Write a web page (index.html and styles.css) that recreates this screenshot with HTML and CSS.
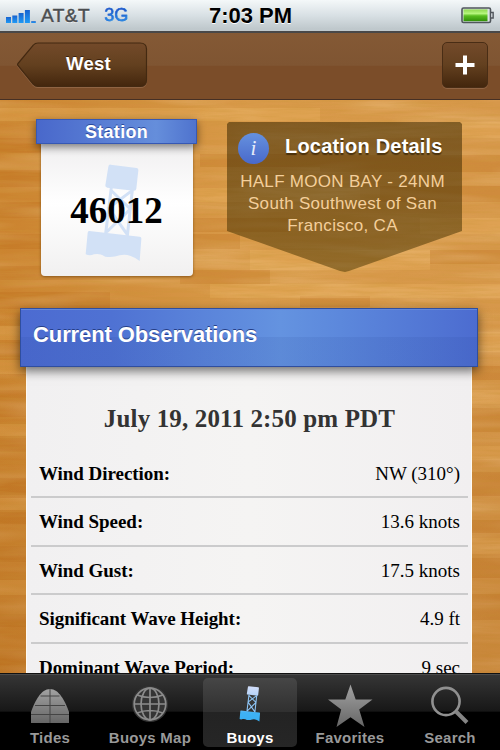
FILE: index.html
```
<!DOCTYPE html>
<html lang="en">
<head>
    <meta charset="UTF-8">
    <meta name="viewport" content="width=device-width, initial-scale=1.0">
    <title>Station 46012</title>
    <link rel="stylesheet" href="styles.css">
</head>
<body>
    <!-- Shared shapes -->
    <svg class="defs" width="0" height="0" aria-hidden="true">
        <defs>
            <linearGradient id="grey" x1="0" y1="0" x2="0" y2="1">
                <stop offset="0" stop-color="#a2a2a2"/>
                <stop offset="1" stop-color="#666"/>
            </linearGradient>
            <linearGradient id="sky" gradientUnits="userSpaceOnUse" x1="0" y1="178" x2="0" y2="467">
                <stop offset="0" stop-color="#d3defa"/>
                <stop offset="0.6" stop-color="#8ec4f4"/>
                <stop offset="0.75" stop-color="#3fb2f5"/>
                <stop offset="1" stop-color="#39aef2"/>
            </linearGradient>
            <linearGradient id="bars" x1="0" y1="0" x2="0" y2="1">
                <stop offset="0" stop-color="#1762cf"/>
                <stop offset="1" stop-color="#1e9af6"/>
            </linearGradient>
            <linearGradient id="back" x1="0" y1="0" x2="0" y2="1">
                <stop offset="0" stop-color="#734a2a"/>
                <stop offset="0.5" stop-color="#63401f"/>
                <stop offset="1" stop-color="#43260d"/>
            </linearGradient>
            <linearGradient id="charge" x1="0" y1="0" x2="0" y2="1">
                <stop offset="0" stop-color="#8fd94e"/>
                <stop offset="0.35" stop-color="#b5f57c"/>
                <stop offset="0.55" stop-color="#58bd1e"/>
                <stop offset="1" stop-color="#318f08"/>
            </linearGradient>
            <symbol id="buoy" viewBox="190 170 180 300">
                <path d="M270 178 348 188Q354 189 353 195L347 250Q346 257 339 256L260 247Q253 246 254 240L263 184Q264 177 270 178Z"/>
                <path d="M206 377 357 394Q363 395 362 401L357 467Q345 457 330 452Q313 445 297 450Q275 458 254 454Q238 443 220 447Q208 453 195 447L201 382Q202 376 206 377Z"/>
                <path class="truss" d="M272 246 255 384M335 254 320 392M270 254 329 311 258 380M334 256 264 308 320 388"/>
            </symbol>
        </defs>
    </svg>

    <div class="screen">
        <header class="status-bar">
            <div class="carrier">
                <svg class="signal" width="30" height="14" viewBox="0 0 30 14">
                    <g fill="url(#bars)">
                        <rect x="0" y="7" width="5" height="6"/>
                        <rect x="6.3" y="5.5" width="5" height="7.5"/>
                        <rect x="12.6" y="3" width="5" height="10"/>
                        <rect x="18.9" y="0" width="5" height="13"/>
                        <rect x="25.2" y="11.2" width="4.6" height="1.8"/>
                    </g>
                </svg>
                <span class="carrier-name">AT&amp;T</span>
                <span class="network">3G</span>
            </div>
            <div class="clock">7:03 PM</div>
            <div class="battery">
                <svg width="34" height="17" viewBox="0 0 34 17">
                    <rect x="1" y="1" width="28.5" height="14.5" rx="1.5" fill="#d9e3e3" stroke="#50565c" stroke-width="1.6"/>
                    <rect x="2.5" y="2.4" width="24" height="11.8" fill="url(#charge)"/>
                    <path d="M30 5.5h2.2v5.5H30" fill="#c5cbd0" stroke="#50565c" stroke-width="1.3"/>
                </svg>
            </div>
        </header>

        <nav class="nav-bar">
            <a class="back-button">
                <svg class="back-shape" width="131" height="46" viewBox="0 0 131 46">
                    <path d="M21 1H123Q129.5 1 129.5 7V38Q129.5 44.5 123 44.5H21Q18 44.5 16.5 42.5L1 23.5Q0 22.5 1 21.5L16.5 3Q18 1 21 1Z" fill="url(#back)" stroke="#432911" stroke-width="1.2"/>
                </svg>
                <span class="back-label">West</span>
            </a>
            <a class="add-button">
                <svg width="20" height="20" viewBox="0 0 20 20">
                    <path d="M8 .5h4v7.5h7.5v4H12v7.5H8V12H.5V8H8z" fill="#fff"/>
                </svg>
            </a>
        </nav>

        <main class="content">
            <!-- Wooden desk behind the cards -->
            <svg class="wood" width="500" height="574" viewBox="0 0 500 574">
                <defs>
                    <filter id="grain" x="0" y="0" width="100%" height="100%">
                        <feTurbulence type="fractalNoise" baseFrequency="0.025 0.35" numOctaves="3" seed="7"/>
                        <feColorMatrix values="0 0 0 0 0.6  0 0 0 0 0.3  0 0 0 0 0.04  1.5 0 0 0 -0.55"/>
                    </filter>
                    <filter id="shine" x="0" y="0" width="100%" height="100%">
                        <feTurbulence type="fractalNoise" baseFrequency="0.008 0.07" numOctaves="2" seed="21"/>
                        <feColorMatrix values="0 0 0 0 1  0 0 0 0 0.78  0 0 0 0 0.45  2 0 0 0 -0.85"/>
                    </filter>
                    <linearGradient id="desk">
                        <stop offset="0" stop-color="#cb832f"/>
                        <stop offset="0.5" stop-color="#d99a4a"/>
                        <stop offset="1" stop-color="#d7984b"/>
                    </linearGradient>
                    <linearGradient id="shade" x1="0" y1="0" x2="0" y2="1">
                        <stop offset="0.35" stop-color="#a85f15" stop-opacity="0"/>
                        <stop offset="1" stop-color="#a85f15" stop-opacity="0.3"/>
                    </linearGradient>
                </defs>
                <rect width="500" height="574" fill="url(#desk)"/>
                <path fill="#b86816" opacity="0.26" d="M0 38h150v15H0zM320 55h180v17H320zM0 70h92v17H0zM200 54h120v13H200zM0 102h60v16H0zM180 118h110v14H180zM380 86h120v16H380zM0 134h240v15H0zM430 150h70v14H430zM0 166h130v14H0zM180 170h90v14H180zM0 192h110v17H0zM300 196h70v11H300zM0 242h27v15H0zM0 290h27v27H0zM0 338h27v14H0zM0 378h27v17H0zM0 412h27v12H0zM0 446h27v16H0zM0 514h27v13H0zM472 266h28v14H472zM472 308h28v24H472zM472 372h28v24H472zM472 420h28v13H472zM472 458h28v20H472zM472 494h28v26H472zM0 550h27v24H0z"/>
                <path fill="#f0b967" opacity="0.28" d="M0 8h320v13H0zM350 22h150v16H350zM120 88h240v14H120zM420 118h80v16H420zM250 150h180v20H250zM210 184h290v14H210zM60 209h200v12H60zM0 226h27v14H0zM0 260h27v14H0zM0 324h27v12H0zM0 398h27v12H0zM0 480h27v15H0zM472 232h28v20H472zM472 290h28v14H472zM472 346h28v14H472zM472 438h28v16H472z"/>
                <rect width="500" height="574" filter="url(#shine)" opacity="0.3"/>
                <rect width="500" height="574" filter="url(#grain)" opacity="0.5"/>
                <rect width="500" height="574" fill="url(#shade)"/>
            </svg>

            <section class="cards">
                <div class="station">
                    <h2 class="station-title">Station</h2>
                    <div class="station-body">
                        <svg class="station-buoy" width="60" height="100"><use href="#buoy"/></svg>
                        <span class="station-id">46012</span>
                    </div>
                </div>
                <div class="location">
                    <div class="location-head">
                        <span class="info-icon">i</span>
                        <h2 class="location-title">Location Details</h2>
                    </div>
                    <p class="location-text">HALF MOON BAY - 24NM<br>South Southwest of San<br>Francisco, CA</p>
                </div>
            </section>

            <section class="observations">
                <h2 class="observations-title">Current Observations</h2>
                <div class="sheet">
                    <h3 class="timestamp">July 19, 2011 2:50 pm PDT</h3>
                    <dl class="readings">
                        <div class="reading"><dt>Wind Direction:</dt><dd>NW (310°)</dd></div>
                        <div class="reading"><dt>Wind Speed:</dt><dd>13.6 knots</dd></div>
                        <div class="reading"><dt>Wind Gust:</dt><dd>17.5 knots</dd></div>
                        <div class="reading"><dt>Significant Wave Height:</dt><dd>4.9 ft</dd></div>
                        <div class="reading"><dt>Dominant Wave Period:</dt><dd>9 sec</dd></div>
                    </dl>
                </div>
            </section>
        </main>

        <footer class="tab-bar">
            <a class="tab">
                <svg class="tab-icon" width="46" height="44" viewBox="0 0 46 44">
                    <path d="M4 40V29C8 18 14 6 23 6S38 18 42 29V40Z" fill="url(#grey)"/>
                    <path d="M23 6V40M13.5 13H32.5M8 22.5H38M4 31.5H42" stroke="#444" stroke-width="1"/>
                </svg>
                <span class="tab-label">Tides</span>
            </a>
            <a class="tab">
                <svg class="tab-icon" width="46" height="44" viewBox="0 0 46 44">
                    <circle cx="23" cy="21" r="18" fill="#343434"/>
                    <g fill="none" stroke="#8c8c8c" stroke-width="1.7">
                        <circle cx="23" cy="21" r="15.8"/>
                        <ellipse cx="23" cy="21" rx="9" ry="15.8"/>
                        <path d="M23 5V37M7 21H39M10 12Q23 17 36 12M10 30Q23 25 36 30"/>
                    </g>
                </svg>
                <span class="tab-label">Buoys Map</span>
            </a>
            <a class="tab tab-active">
                <svg class="tab-icon tab-buoy" width="22" height="44"><use href="#buoy"/></svg>
                <span class="tab-label">Buoys</span>
            </a>
            <a class="tab">
                <svg class="tab-icon" width="46" height="44" viewBox="0 0 46 44">
                    <path d="M23.5 1.5 28.7 16.5H45.5L32.2 26.5 37.5 44 23.5 34.3 9.500 44 14.2 26.5 1 16.5H18.3Z" fill="url(#grey)"/>
                </svg>
                <span class="tab-label">Favorites</span>
            </a>
            <a class="tab">
                <svg class="tab-icon" width="46" height="44" viewBox="0 0 46 44">
                    <circle cx="19" cy="18.5" r="13.6" fill="none" stroke="#909090" stroke-width="2.6"/>
                    <path d="M29 28.5 40 39.5" stroke="#858585" stroke-width="4"/>
                </svg>
                <span class="tab-label">Search</span>
            </a>
        </footer>
    </div>
</body>
</html>
```
FILE: styles.css
```
* {
    box-sizing: border-box;
}

body {
    margin: 0;
    background: #000;
    font-family: "Liberation Sans", Arial, sans-serif;
}

h2, h3, p, dl, dd {
    margin: 0;
}

.defs {
    position: absolute;
}

.truss {
    fill: none;
    stroke: currentColor;
    stroke-width: 9;
}

.screen {
    display: flex;
    flex-direction: column;
    width: 500px;
    height: 750px;
    overflow: hidden;
}

/* Status bar */

.status-bar {
    display: grid;
    grid-template-columns: 1fr auto 1fr;
    align-items: center;
    flex: none;
    height: 33px;
    padding: 0 5px 2px 6px;
    background: linear-gradient(#f4f8f9, #d8e0e4 50%, #bfc8cc 93%);
    border-bottom: 2px solid #494848;
}

.carrier {
    display: flex;
    align-items: center;
    font-size: 19px;
    line-height: 31px;
}

.signal {
    margin-top: 3px;
}

.carrier-name {
    margin-left: 5px;
    color: #4a4d50;
    -webkit-text-stroke: 0.5px #4a4d50;
    text-shadow: 0 1px 0 #fff;
    letter-spacing: 0.5px;
}

.network {
    margin-left: 14px;
    color: transparent;
    background: linear-gradient(#1c45bd 25%, #30a3f0 80%);
    background-clip: text;
    -webkit-background-clip: text;
    -webkit-text-stroke: 0.4px #2475dd;
    font-size: 18px;
}

.clock {
    font-size: 22px;
    font-weight: bold;
    line-height: 31px;
    color: #000;
    text-shadow: 0 1px 0 #fff;
}

.battery {
    justify-self: end;
    height: 17px;
}

.battery svg {
    display: block;
}

/* Navigation bar */

.nav-bar {
    display: flex;
    justify-content: space-between;
    align-items: center;
    flex: none;
    height: 67px;
    padding: 0 12px 2px 17px;
    background: linear-gradient(#845935, #7f5532 49%, #7b4d29 50%, #7b4d29);
    border-bottom: 1px solid #463024;
}

.back-button {
    position: relative;
    width: 131px;
    height: 46px;
}

.back-shape {
    display: block;
    filter: drop-shadow(0 1px 0 #906443);
}

.back-label {
    position: absolute;
    top: 0;
    left: 49px;
    font-size: 18.5px;
    font-weight: bold;
    line-height: 43px;
    letter-spacing: 0.3px;
    color: #fff;
    text-shadow: 0 -1px 0 #3c220d;
}

.add-button {
    display: flex;
    justify-content: center;
    align-items: center;
    width: 46px;
    height: 46px;
    background: linear-gradient(#734a2a, #63401f 50%, #43260d);
    border: 1px solid #492d15;
    border-radius: 5px;
    box-shadow: 0 1px 0 #906443;
}

/* Content */

.content {
    position: relative;
    z-index: 0;
    flex: 1;
    min-height: 0;
    overflow: hidden;
}

.wood {
    position: absolute;
    top: 0;
    left: 0;
    z-index: -1;
}

.cards {
    display: flex;
    align-items: flex-start;
    gap: 30px;
    height: 208px;
    padding: 19px 0 0 36px;
}

.station {
    display: flex;
    flex-direction: column;
    align-items: center;
    width: 161px;
}

.station-title {
    z-index: 1;
    width: 161px;
    height: 25px;
    background: linear-gradient(90deg, #4968cb, #658edb 75%, #4f73ce);
    border: 1px solid #3658b4;
    box-shadow: 0 3px 9px rgba(0, 0, 0, 0.5);
    font-size: 18px;
    line-height: 25px;
    letter-spacing: 0.3px;
    text-align: center;
    color: #fff;
    text-shadow: 0 -1px 0 #28489c;
}

.station-body {
    display: flex;
    justify-content: center;
    position: relative;
    width: 152px;
    height: 132px;
    padding-top: 44px;
    background: linear-gradient(#f0eff0, #fff 45%, #f1f0f0);
    border-radius: 0 0 4px 4px;
    box-shadow: 0 1px 3px rgba(90, 50, 0, 0.6);
}

.station-buoy {
    position: absolute;
    top: 18px;
    left: 43px;
    color: #d2e1f6;
    fill: #d2e1f6;
}

.station-id {
    position: relative;
    font-family: "Liberation Serif", "Times New Roman", serif;
    font-size: 37px;
    font-weight: bold;
    line-height: 45px;
    color: #000;
}

.location {
    width: 235px;
    height: 150px;
    margin-top: 3px;
    padding: 11px 10px 0;
    background: linear-gradient(rgba(58, 38, 0, 0.55), rgba(72, 52, 0, 0.5));
    clip-path: polygon(0 2px, 2px 0, 233px 0, 235px 2px, 235px 109px, 122px 149px, 118px 150px, 113px 149px, 0 109px);
}

.location-head {
    display: flex;
    align-items: center;
    height: 31px;
    padding-left: 1px;
}

.info-icon {
    width: 31px;
    height: 31px;
    border-radius: 50%;
    background: linear-gradient(#6591df, #4969ca);
    font-family: "Liberation Serif", "Times New Roman", serif;
    font-size: 21px;
    font-style: italic;
    line-height: 30px;
    text-align: center;
    color: #e8edfb;
}

.location-title {
    margin: -4px 0 0 16px;
    font-size: 20px;
    letter-spacing: 0.2px;
    white-space: nowrap;
    color: #fff;
    text-shadow: 0 2px 1px rgba(50, 30, 0, 0.7);
}

.location-text {
    margin: 7px -3px 0 -7px;
    font-size: 17px;
    line-height: 22px;
    letter-spacing: 0.3px;
    text-align: center;
    white-space: nowrap;
    color: #f4cf9b;
}

/* Observations */

.observations {
    display: flex;
    flex-direction: column;
    align-items: center;
    width: 498px;
}

.observations-title {
    z-index: 1;
    width: 458px;
    height: 59px;
    padding-left: 12px;
    background:
        linear-gradient(transparent 49%, rgba(30, 60, 140, 0.1) 50%),
        linear-gradient(90deg, #4c6bd1, #4f72d3 20%, #6493e0 57%, #5c88dc 70%, #4c6cd0);
    border: 1px solid #2f4e9f;
    box-shadow: inset 0 1px 0 #6488db, 0 4px 10px rgba(0, 0, 0, 0.55);
    font-size: 22px;
    line-height: 52px;
    letter-spacing: -0.1px;
    color: #fff;
    text-shadow: 0 -1px 0 #263f87;
}

.sheet {
    width: 446px;
    height: 320px;
    padding: 34px 3px 0 4px;
    background: linear-gradient(90deg, #f1f0f1, #f5f4f3 50%, #f1eff0);
    border: solid #fffaf3;
    border-width: 0 1px;
    font-family: "Liberation Serif", "Times New Roman", serif;
}

.timestamp {
    height: 49px;
    font-size: 25px;
    line-height: 36px;
    letter-spacing: 0.15px;
    text-align: center;
    color: #333;
}

.reading {
    display: flex;
    justify-content: space-between;
    height: 48.4px;
    padding: 0 8px;
    border-bottom: 2px solid #cbcbcc;
    font-size: 19px;
    line-height: 47px;
    color: #000;
}

.reading dt {
    font-weight: bold;
    letter-spacing: -0.05px;
}

/* Tab bar */

.tab-bar {
    display: flex;
    flex: none;
    height: 77px;
    background: linear-gradient(#363636, #171717 49%, #000 50%);
    border-top: 1px solid #111;
    box-shadow: inset 0 1px 0 #4b4b4b;
}

.tab {
    display: flex;
    flex-direction: column;
    align-items: center;
    width: 94px;
    height: 69px;
    margin: 4px 3px 0;
    padding-top: 5px;
    border-radius: 5px;
    color: #999;
}

.tab-icon {
    display: block;
    flex: none;
}

.tab-label {
    margin-top: 1px;
    font-size: 15px;
    font-weight: bold;
    line-height: 20px;
    letter-spacing: 0.25px;
    white-space: nowrap;
}

.tab-active {
    background: linear-gradient(#464646, #303030 49%, #232323 50%, #262626);
    color: #fff;
}

.tab-buoy {
    padding: 2px 0 5px;
    fill: url(#sky);
    color: #8ec4f4;
}
```
